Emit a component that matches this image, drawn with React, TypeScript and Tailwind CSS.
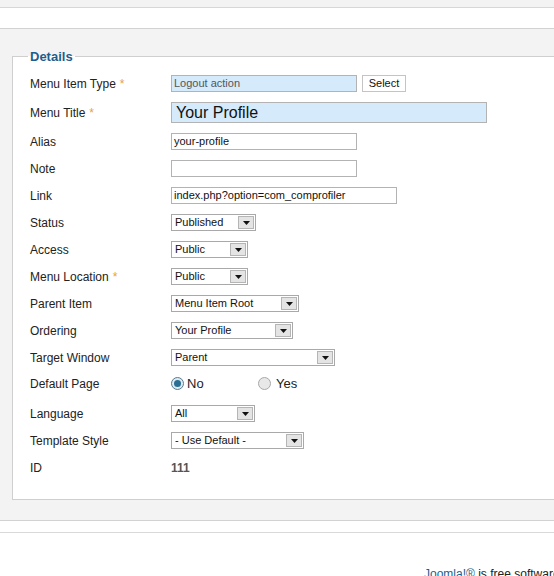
import React from "react";

const font = { fontFamily: '"Liberation Sans", Arial, sans-serif' };

function Star() {
  return <span className="ml-[4px] text-[#e3a34a]">*</span>;
}

function Row({ label, req, className = "", children }: { label: string; req?: boolean; className?: string; children?: React.ReactNode }) {
  return (
    <div className={`flex h-[27px] items-center ${className}`}>
      <div className="w-[141px] shrink-0 text-[12px] text-[#222]">
        {label}
        {req && <Star />}
      </div>
      {children}
    </div>
  );
}

function Text({ w, value = "", blue }: { w: string; value?: string; blue?: boolean }) {
  return (
    <div
      className={`${w} flex h-[17px] items-center border border-[#b3b3b3] pl-[2px] text-[11px] ${
        blue ? "bg-[#d5eafa] text-[#555]" : "bg-white text-[#111]"
      }`}
    >
      {value}
    </div>
  );
}

function Select({ w, value }: { w: string; value: string }) {
  return (
    <div className={`${w} flex h-[17px] items-center border border-[#a9a9a9] bg-white text-[11px] text-[#111]`}>
      <span className="flex-1 pl-[3px]">{value}</span>
      <span className="mr-[1px] flex h-[13px] w-[16px] items-center justify-center border border-[#b5b5b5] bg-[#e4e4e4]">
        <svg width="7" height="4" viewBox="0 0 7 4">
          <path d="M0 0h7L3.5 4z" fill="#111" />
        </svg>
      </span>
    </div>
  );
}

function Radio({ on }: { on?: boolean }) {
  return (
    <span
      className={`flex h-[13px] w-[13px] items-center justify-center rounded-full border ${
        on ? "border-[#5a7a90] bg-[#dfe9f0]" : "border-[#a8a8a8] bg-[#e8e8e8]"
      }`}
    >
      {on && <span className="h-[7px] w-[7px] rounded-full bg-[#2a6f93]" />}
    </span>
  );
}

export default function App() {
  return (
    <div className="w-[554px] h-[576px] overflow-hidden bg-white" style={font}>
      <div className="h-[8px] border-b border-[#d7d7d7] bg-[#f3f3f3]" />
      <div className="h-[21px] border-b border-[#d2d2d2] bg-white" />
      <div className="border-b border-[#d2d2d2] bg-[#f3f3f3] pl-[12px] pt-[20px] pb-[20px]">
        <fieldset className="w-[560px] border border-[#cfcfcf] bg-white px-[15px] pt-[6px] pb-[18px]">
          <legend className="px-[2px] text-[13px] font-bold leading-[15px] text-[#1f5d8c]">Details</legend>
          <div className="pl-[2px]">
            <Row label="Menu Item Type" req>
              <Text w="w-[186px]" value="Logout action" blue />
              <div className="ml-[5px] flex h-[17px] w-[44px] items-center justify-center border border-[#c4c4c4] bg-white text-[11px] text-[#111]">
                Select
              </div>
            </Row>
            <Row label="Menu Title" req className="mt-[2px]">
              <div className="flex h-[21px] w-[316px] items-center border border-[#b3b3b3] bg-[#d5eafa] pl-[4px] text-[16px] text-[#111]">
                Your Profile
              </div>
            </Row>
            <Row label="Alias" className="mt-[2px]">
              <Text w="w-[186px]" value="your-profile" />
            </Row>
            <Row label="Note">
              <Text w="w-[186px]" />
            </Row>
            <Row label="Link">
              <Text w="w-[226px]" value="index.php?option=com_comprofiler" />
            </Row>
            <Row label="Status">
              <Select w="w-[85px]" value="Published" />
            </Row>
            <Row label="Access">
              <Select w="w-[77px]" value="Public" />
            </Row>
            <Row label="Menu Location" req>
              <Select w="w-[77px]" value="Public" />
            </Row>
            <Row label="Parent Item">
              <Select w="w-[128px]" value="Menu Item Root" />
            </Row>
            <Row label="Ordering">
              <Select w="w-[122px]" value="Your Profile" />
            </Row>
            <Row label="Target Window">
              <Select w="w-[164px]" value="Parent" />
            </Row>
            <Row label="Default Page" className="-mt-[1px]">
              <div className="flex items-center text-[13px] text-[#222]">
                <Radio on />
                <span className="ml-[3px] w-[71px]">No</span>
                <Radio />
                <span className="ml-[5px]">Yes</span>
              </div>
            </Row>
            <Row label="Language" className="mt-[3px]">
              <Select w="w-[84px]" value="All" />
            </Row>
            <Row label="Template Style">
              <Select w="w-[133px]" value="- Use Default -" />
            </Row>
            <Row label="ID">
              <span className="text-[12px] font-bold text-[#555]">111</span>
            </Row>
          </div>
        </fieldset>
      </div>
      <div className="h-[12px] border-b border-[#d9d9d9] bg-white" />
      <div className="pl-[424px] pt-[32px] text-[12px] text-[#222] whitespace-nowrap">
        <span className="text-[#1f5d8c]">Joomla!®</span> is free software released
      </div>
    </div>
  );
}
